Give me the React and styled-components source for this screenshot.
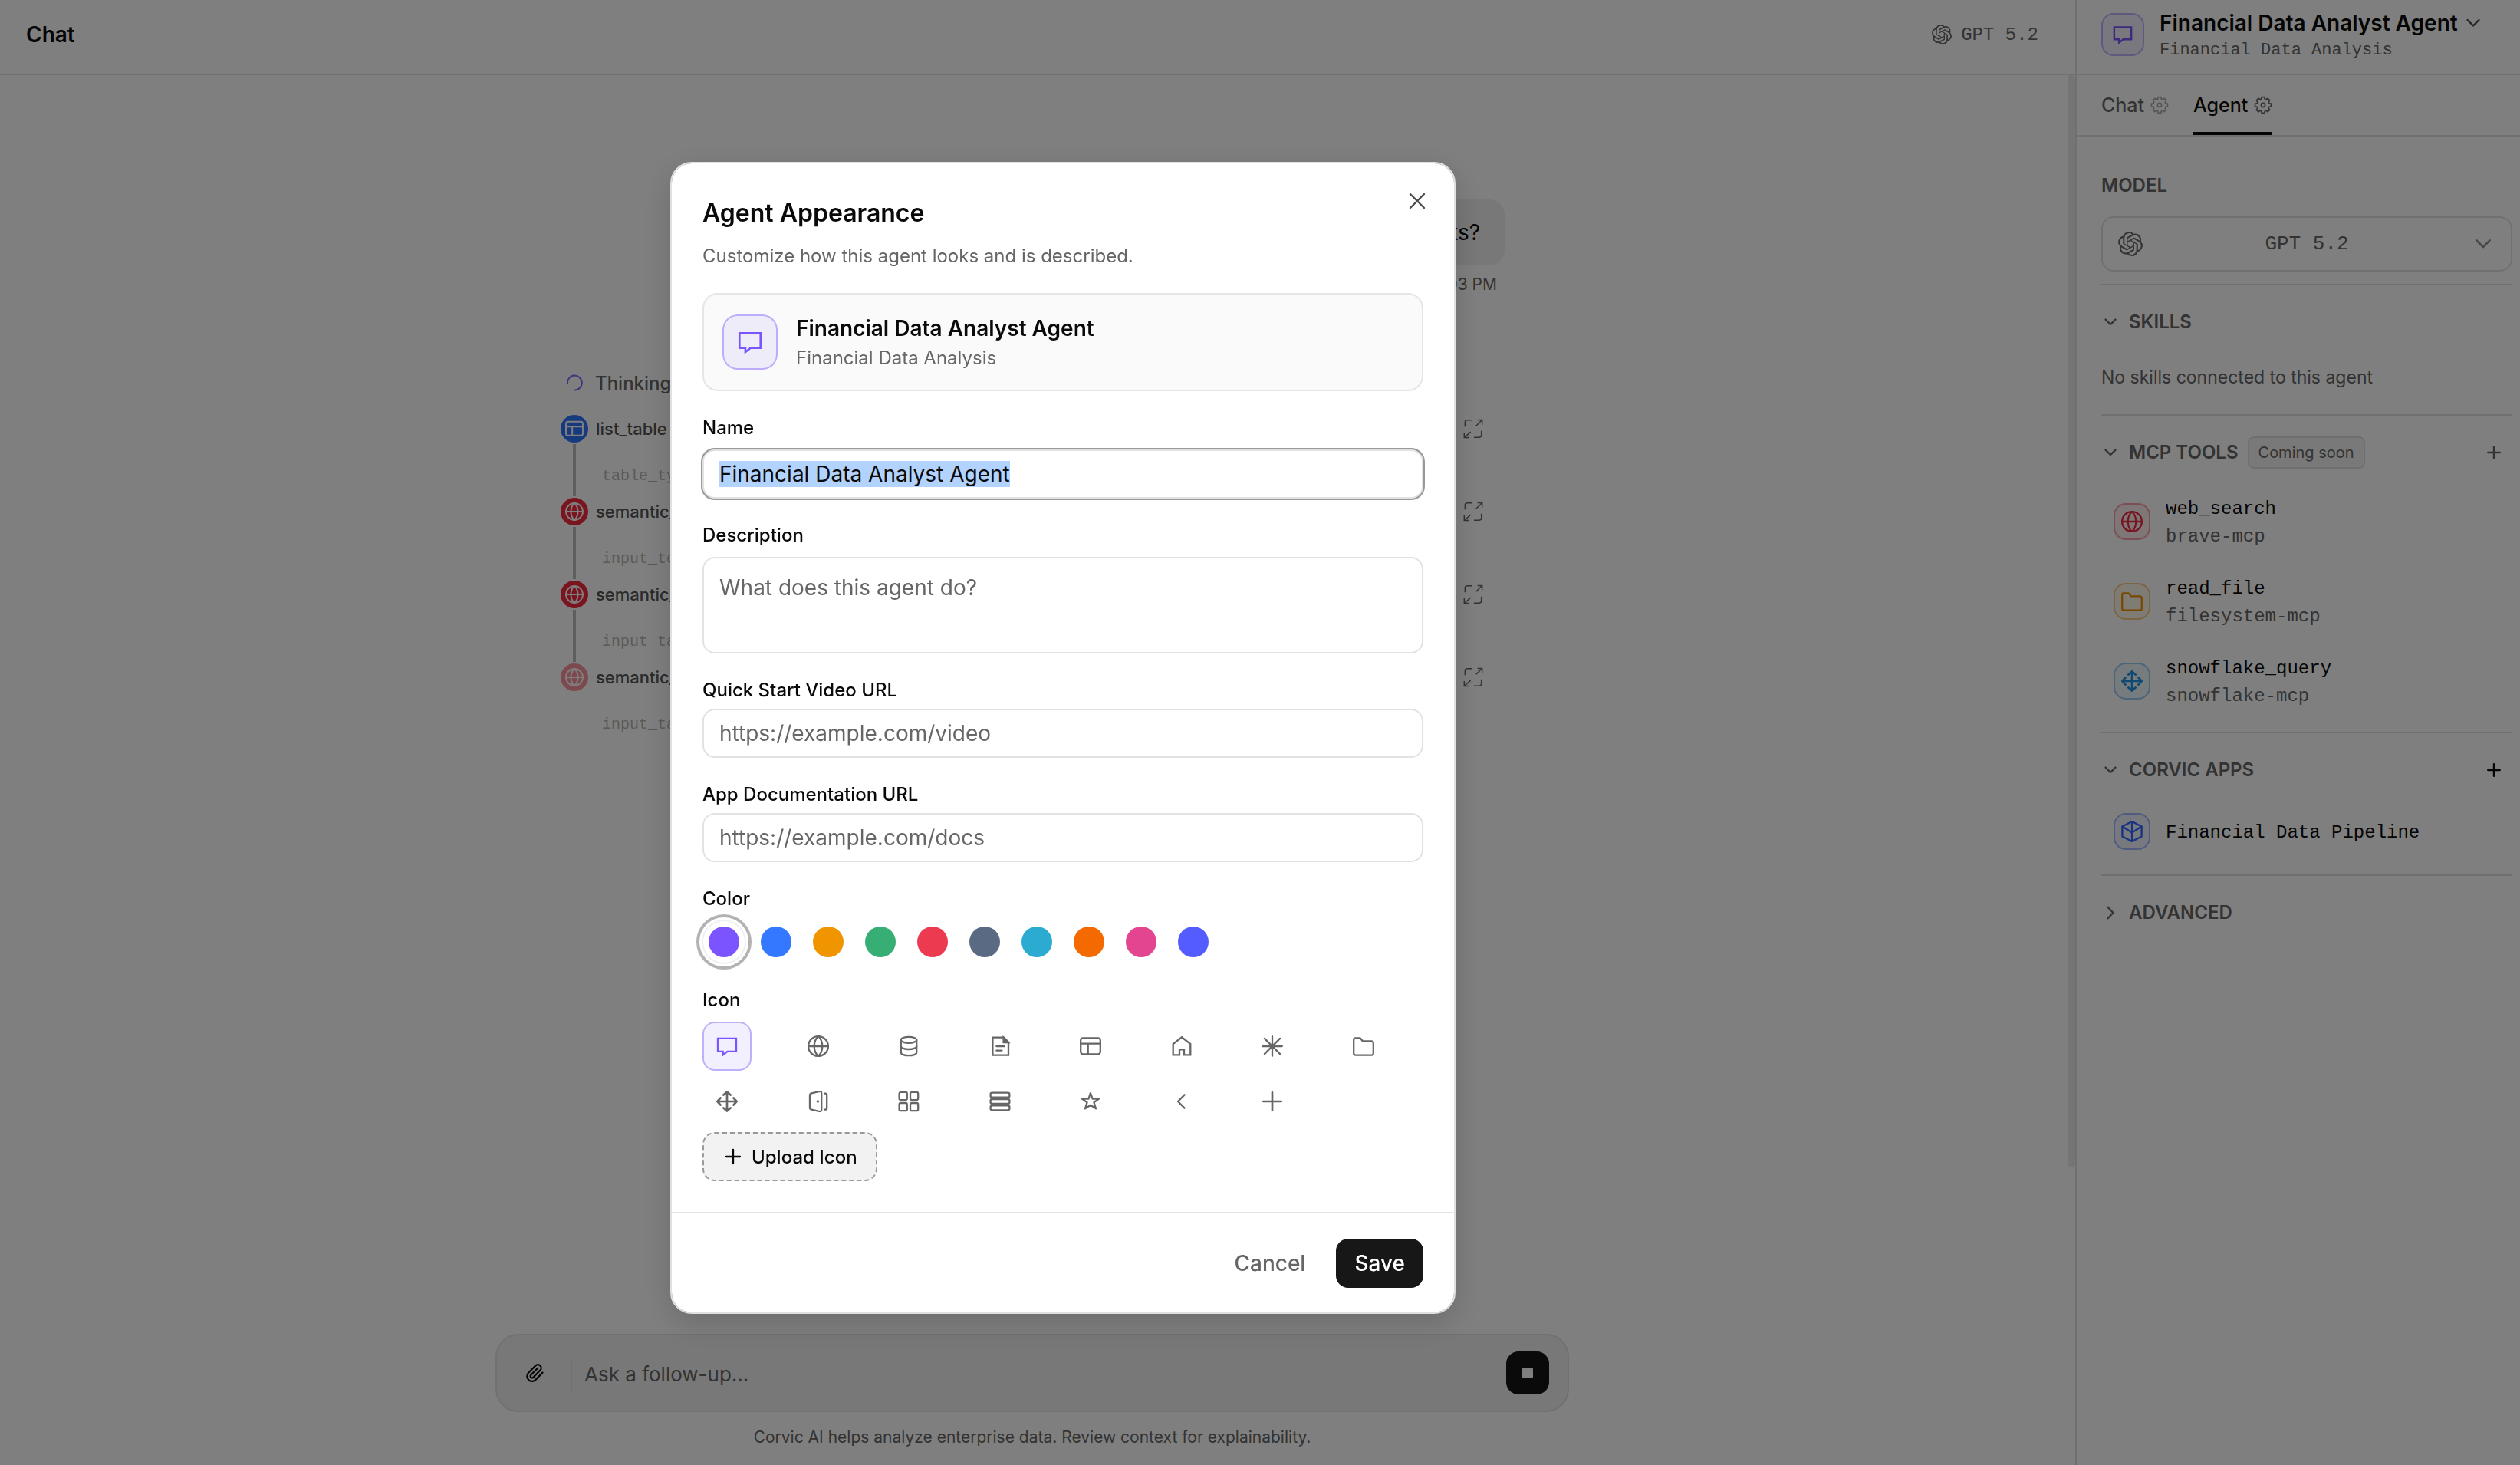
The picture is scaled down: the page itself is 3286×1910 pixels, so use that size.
import React, { useEffect, useRef, useState } from "react";
import styled, { createGlobalStyle } from "styled-components";
import { Paperclip } from "lucide-react";
import { SiOpenai } from "react-icons/si";

const sans = `Inter, "Liberation Sans", sans-serif`;
const mono = `"Liberation Mono", monospace`;

const GlobalStyle = createGlobalStyle`
  * {
    box-sizing: border-box;
  }
  body {
    margin: 0;
    background: #fff;
    color: #0a0a0a;
    font-family: ${sans};
    font-size: 28px;
  }
  button, input, textarea, select {
    font: inherit;
    color: inherit;
    margin: 0;
  }
  button {
    cursor: pointer;
  }
  h1, h2, h3, p, ul {
    margin: 0;
    padding: 0;
  }
  svg {
    display: block;
    flex: none;
  }
`;

/* ---------- icons ---------- */

const Svg = styled.svg.attrs({ viewBox: "0 0 28 28", "aria-hidden": true })`
  width: ${(p) => p.$size || 28}px;
  height: ${(p) => p.$size || 28}px;
  fill: none;
  stroke: currentColor;
  stroke-width: ${(p) => p.$weight || 2.3};
  stroke-linecap: ${(p) => (p.$sharp ? "butt" : "round")};
  stroke-linejoin: ${(p) => (p.$sharp ? "miter" : "round")};
`;

const gearPath = () => {
  const pts = [];
  for (let i = 0; i < 8; i++) {
    const a = (i * Math.PI) / 4 - Math.PI / 2;
    [[-0.28, 9.6], [-0.17, 12.4], [0.17, 12.4], [0.28, 9.6]].forEach(([d, r]) => {
      pts.push(`${(14 + r * Math.cos(a + d)).toFixed(2)} ${(14 + r * Math.sin(a + d)).toFixed(2)}`);
    });
  }
  return `M${pts.join("L")}Z`;
};

const shapes = {
  chat: { sharp: true, body: <path d="M2 3.8H26V20.8H14.6L8.7 25.4V20.8H2Z" /> },
  globe: {
    body: (
      <>
        <circle cx="14" cy="14" r="12.9" />
        <path d="M1 14H27" />
        <path d="M14 1C10 4.8 8.7 9.4 8.7 14S10 23.2 14 27C18 23.2 19.3 18.6 19.3 14S18 4.8 14 1Z" />
      </>
    ),
  },
  database: {
    body: (
      <>
        <ellipse cx="14" cy="5.8" rx="10.2" ry="4" />
        <path d="M3.8 5.8V22.2C3.8 24.6 8.4 26.2 14 26.2S24.2 24.6 24.2 22.2V5.8" />
        <path d="M3.8 14C3.8 16.4 8.4 18 14 18S24.2 16.4 24.2 14" />
      </>
    ),
  },
  document: {
    sharp: true,
    body: (
      <>
        <path d="M4.4 2.7H19L25 8.7V25.7H4.4Z" />
        <path d="M18.6 2.7V9.1H25Z" fill="currentColor" />
        <path d="M9.4 14H19.6M9.4 19.7H16.4" strokeLinecap="round" />
      </>
    ),
  },
  table: {
    body: (
      <>
        <rect x="1.2" y="3.3" width="25.6" height="21" rx="3" />
        <path d="M1.2 10.7H26.8M10.7 10.7V24.3" />
      </>
    ),
  },
  home: { sharp: true, body: <path d="M2.7 11.1L14 2.3L25.3 11.1V25.4H17V18.3H11V25.4H2.7Z" /> },
  asterisk: { body: <path d="M14 1.2V26.8M1.2 14H26.8M3.9 3.9L24.1 24.1M24.1 3.9L3.9 24.1" /> },
  folder: {
    body: <path d="M1.2 5.7C1.2 4.4 2 3.5 3.3 3.5H8.6C9.4 3.5 10.1 3.8 10.6 4.5L12.8 7.3H24.3C25.9 7.3 26.8 8.4 26.8 10V23C26.8 24.6 25.9 25.7 24.3 25.7H3.7C2.1 25.7 1.2 24.6 1.2 23Z" />,
  },
  move: {
    body: (
      <path
        d="M14 1.4V26.6M1.4 14H26.6M9.4 5.6L14 1.4L18.6 5.6M9.4 22.4L14 26.6L18.6 22.4M5.6 9.4L1.4 14L5.6 18.6M22.4 9.4L26.6 14L22.4 18.6"
        strokeWidth="2.7"
      />
    ),
  },
  door: {
    body: (
      <>
        <path d="M3 6C3 4.5 3.8 3.6 5.2 3.3L15.6 1C17.2 0.7 18.2 1.6 18.2 3V25C18.2 26.5 17.2 27.3 15.6 27L5.2 24.7C3.8 24.4 3 23.5 3 22Z" />
        <path d="M22 3.6H23C24.4 3.6 25.2 4.5 25.2 5.8V22.4C25.2 23.7 24.4 24.6 23 24.6H22" />
        <circle cx="13.4" cy="14" r="0.6" fill="currentColor" />
      </>
    ),
  },
  grid: {
    body: (
      <>
        <rect x="1.6" y="1.9" width="10.2" height="10.2" rx="2" />
        <rect x="16" y="1.9" width="10.2" height="10.2" rx="2" />
        <rect x="1.6" y="16" width="10.2" height="10.2" rx="2" />
        <rect x="16" y="16" width="10.2" height="10.2" rx="2" />
      </>
    ),
  },
  rows: {
    body: (
      <>
        <rect x="1.6" y="2.7" width="24.8" height="6" rx="2" />
        <rect x="1.6" y="11" width="24.8" height="6" rx="2" />
        <rect x="1.6" y="19.3" width="24.8" height="6" rx="2" />
      </>
    ),
  },
  star: {
    body: <path d="M14 3.2L16.6 10.6H25L18.4 15.2L21 23.4L14 18.8L7 23.4L9.6 15.2L3 10.6H11.4Z" />,
  },
  left: { body: <path d="M17.6 5.4L9 14L17.6 22.6" /> },
  plus: { body: <path d="M14 2.2V25.8M2.2 14H25.8" strokeWidth="2.7" /> },
  smallPlus: { body: <path d="M14 5V23M5 14H23" /> },
  close: { body: <path d="M5 5L23 23M23 5L5 23" /> },
  down: { body: <path d="M6.5 10L14 17.5L21.5 10" /> },
  right: { body: <path d="M10 5.5L18 14L10 22.5" /> },
  cube: {
    body: (
      <>
        <path d="M14 1L26.6 7.6V20.4L14 27L1.4 20.4V7.6Z" />
        <path d="M14 1V27M1.4 7.6L14 15.4L26.6 7.6" />
      </>
    ),
  },
  gear: {
    body: (
      <>
        <path d={gearPath()} />
        <circle cx="14" cy="14" r="3" />
      </>
    ),
  },
  expand: {
    sharp: true,
    body: (
      <>
        <path d="M2.5 11V5Q2.5 2 5.5 2H13M25.5 17V23Q25.5 26 22.5 26H15" />
        <path d="M18 10L26.6 1.6M20 1.6H26.6V8M10.4 18.5L1.4 26.4M1.4 19.4V26.4H8" />
      </>
    ),
  },
  spinner: { body: <path d="M2.5 15A12 12 0 1 1 15 26" /> },
};

function Icon({ name, size, weight }) {
  const shape = shapes[name];
  return (
    <Svg $size={size} $weight={weight} $sharp={shape.sharp}>
      {shape.body}
    </Svg>
  );
}

/* ---------- page ---------- */

const Shell = styled.div`
  display: grid;
  grid-template-columns: minmax(0, 1fr) 580px;
  height: 100vh;
  overflow: hidden;
`;
const Main = styled.main`
  display: flex;
  flex-direction: column;
  min-height: 0;
`;
const TopBar = styled.header`
  display: flex;
  align-items: center;
  justify-content: space-between;
  flex: none;
  height: 98px;
  padding: 0 48px 6px 34px;
  border-bottom: 2px solid #e0e0e0;
`;
const PageTitle = styled.h1`
  font-size: 28px;
  font-weight: 600;
`;
const ModelTag = styled.div`
  display: flex;
  align-items: center;
  gap: 12px;
  color: #666;
  font-family: ${mono};
  font-size: 24px;
`;
const Body = styled.div`
  display: grid;
  grid-template-columns: minmax(0, 1fr) 14px;
  flex: 1;
  min-height: 0;
`;
const ScrollThumb = styled.div`
  justify-self: end;
  width: 10px;
  height: 78.6%;
  border-radius: 5px;
  background: #ebebeb;
`;
const Column = styled.div`
  display: flex;
  flex-direction: column;
  min-height: 0;
`;
const Thread = styled.section`
  flex: 1;
  width: 100%;
  max-width: 1232px;
  margin: 0 auto;
  padding-top: 162px;
`;
const UserMessage = styled.div`
  display: flex;
  flex-direction: column;
  align-items: flex-end;
`;
const Bubble = styled.p`
  padding: 22px 32px;
  border-radius: 20px;
  background: #f0f0f0;
  font-size: 28px;
  line-height: 42px;
`;
const Time = styled.time`
  padding: 9px 10px 0 0;
  color: #666;
  font-size: 21px;
  line-height: 32px;
`;
const Thinking = styled.div`
  display: flex;
  align-items: center;
  gap: 16px;
  height: 60px;
  margin-top: 82px;
  padding-left: 8px;
  color: #666;
  font-size: 24px;
  font-weight: 500;
`;
const Spinner = styled.span`
  color: #8468ff;
`;
const Steps = styled.div`
  padding-top: 12px;
`;
const Step = styled.div`
  display: grid;
  grid-template-columns: 36px minmax(0, 1fr) 26px;
  grid-template-rows: 36px 72px;
  column-gap: 10px;
  align-items: center;
  padding: 0 28px 0 1px;
`;
const StepIcon = styled.span`
  display: grid;
  place-items: center;
  width: 36px;
  height: 36px;
  border-radius: 50%;
  background: ${(p) => p.$color};
  color: #fff;
  opacity: ${(p) => (p.$pending ? 0.5 : 1)};
`;
const StepName = styled.span`
  color: #555;
  font-size: 22px;
  font-weight: 500;
`;
const StepArgs = styled.span`
  padding: 0 0 17px 8px;
  align-self: end;
  color: #b4b4b4;
  font-family: ${mono};
  font-size: 20px;
`;
const Rail = styled.span`
  justify-self: center;
  width: 4px;
  height: 68px;
  background: ${(p) => (p.$last ? "transparent" : "#bdbdbd")};
`;
const IconButton = styled.button`
  display: grid;
  place-items: center;
  padding: 0;
  border: 0;
  background: none;
  color: ${(p) => p.$color || "#666"};
`;

const Composer = styled.form`
  display: flex;
  align-items: center;
  flex: none;
  width: 100%;
  max-width: 1400px;
  height: 102px;
  margin: 0 auto;
  padding: 0 24px 0 36px;
  border: 2px solid #e2e2e2;
  border-radius: 30px;
  background: #f0f0f0;
`;
const Divider = styled.span`
  width: 2px;
  height: 40px;
  margin: 8px 16px 0 34px;
  background: #e2e2e2;
`;
const FollowUp = styled.input`
  flex: 1;
  min-width: 0;
  padding: 2px 0 0;
  border: 0;
  outline: 0;
  background: none;
  font-size: 26px;
  &::placeholder {
    color: #666;
    opacity: 1;
  }
`;
const StopButton = styled.button`
  display: grid;
  place-items: center;
  width: 56px;
  height: 56px;
  padding: 0;
  border: 0;
  border-radius: 16px;
  background: #141414;
  &::before {
    content: "";
    width: 14px;
    height: 14px;
    border-radius: 2px;
    background: #fff;
  }
`;
const Note = styled.p`
  flex: none;
  padding: 17px 0 20px;
  color: #666;
  font-size: 21px;
  line-height: 32px;
  text-align: center;
`;

/* ---------- agent panel ---------- */

const Panel = styled.aside`
  border-left: 2px solid #e0e0e0;
`;
const PanelHeader = styled.header`
  display: flex;
  align-items: center;
  gap: 20px;
  height: 98px;
  padding: 0 10px 6px 32px;
  border-bottom: 2px solid #e0e0e0;
`;
const IconTile = styled.span`
  display: grid;
  place-items: center;
  flex: none;
  width: ${(p) => p.$size}px;
  height: ${(p) => p.$size}px;
  border: 2px solid ${(p) => p.$color}77;
  border-radius: ${(p) => (p.$size > 60 ? 20 : 16)}px;
  background: ${(p) => p.$color}15;
  background-clip: padding-box;
  color: ${(p) => p.$color};
`;
const AgentName = styled.h2`
  display: flex;
  align-items: center;
  gap: 6px;
  padding-top: 8px;
  font-size: 28px;
  font-weight: 600;
  line-height: 34px;
  white-space: nowrap;
  svg {
    color: #444;
  }
`;
const AgentKind = styled.p`
  color: #666;
  font-family: ${mono};
  font-size: 22px;
  line-height: 38px;
`;
const Tabs = styled.nav`
  display: flex;
  gap: 32px;
  height: 80px;
  padding-left: 32px;
  border-bottom: 2px solid #e0e0e0;
`;
const Tab = styled.button`
  display: flex;
  align-items: center;
  gap: 8px;
  padding: 4px 0 0;
  border: 0;
  border-bottom: 4px solid ${(p) => (p.$active ? "#0a0a0a" : "transparent")};
  background: none;
  color: ${(p) => (p.$active ? "#0a0a0a" : "#666")};
  font-size: 25px;
  font-weight: 500;
  svg {
    color: ${(p) => (p.$active ? "#666" : "#aaa")};
  }
`;
const PanelBody = styled.div`
  padding: 46px 10px 0 32px;
`;
const GroupTitle = styled.h3`
  color: #666;
  font-size: 24px;
  font-weight: 600;
  line-height: 36px;
`;
const ModelPicker = styled.label`
  display: flex;
  align-items: center;
  height: 72px;
  margin: 22px 0 16px;
  padding: 0 20px;
  border: 2px solid #e0e0e0;
  border-radius: 16px;
  color: #666;
`;
const PickerArrow = styled.span`
  color: #8c8c8c;
`;
const ModelSelect = styled.select`
  flex: 1;
  appearance: none;
  border: 0;
  outline: 0;
  background: none;
  font-family: ${mono};
  font-size: 26px;
  text-align: center;
  text-align-last: center;
`;
const Section = styled.section`
  padding: 27px 0 14px;
  border-top: 2px solid #e0e0e0;
`;
const SectionHead = styled.div`
  display: flex;
  align-items: center;
  height: 42px;
  padding-right: 12px;
  color: #666;
`;
const Toggle = styled.button`
  display: flex;
  align-items: center;
  gap: 12px;
  padding: 0;
  border: 0;
  background: none;
`;
const Badge = styled.span`
  margin-left: 12px;
  padding: 0 12px;
  border: 2px solid #dedede;
  border-radius: 8px;
  background: #f2f2f2;
  font-size: 20px;
  line-height: 38px;
`;
const AddSlot = styled.div`
  margin-left: auto;
`;
const Empty = styled.p`
  padding-top: 17px;
  color: #666;
  font-size: 23px;
  line-height: 68px;
`;
const ItemList = styled.ul`
  padding-top: 17px;
  list-style: none;
`;
const Item = styled.li`
  display: flex;
  align-items: center;
  gap: 20px;
  min-height: 84px;
  padding: 16px;
  font-family: ${mono};
  font-size: 24px;
  line-height: 36px;
`;
const ItemText = styled.div`
  padding-top: 2px;
  margin-bottom: -2px;
`;
const ItemSource = styled.div`
  color: #666;
`;

/* ---------- dialog ---------- */

const Overlay = styled.div`
  position: fixed;
  inset: 0;
  display: grid;
  justify-items: center;
  align-items: start;
  padding: 211px 514px 0 0;
  overflow: auto;
  background: rgba(0, 0, 0, 0.5);
`;
const Dialog = styled.form`
  position: relative;
  width: 100%;
  max-width: 1024px;
  border: 2px solid #e0e0e0;
  border-radius: 28px;
  background: #fff;
  background-clip: padding-box;
  box-shadow: 0 12px 40px rgba(0, 0, 0, 0.16);
`;
const CloseButton = styled(IconButton)`
  position: absolute;
  top: 35px;
  right: 34px;
`;
const DialogBody = styled.div`
  padding: 40px;
`;
const DialogTitle = styled.h2`
  font-size: 32px;
  font-weight: 600;
  line-height: 50px;
`;
const DialogText = styled.p`
  margin: 13px 0 31px;
  color: #666;
  font-size: 24px;
  line-height: 35px;
`;
const Preview = styled.div`
  display: flex;
  align-items: center;
  gap: 24px;
  padding: 24px;
  border: 2px solid #e5e5e5;
  border-radius: 20px;
  background: #fafafa;
`;
const PreviewName = styled.div`
  font-size: 28px;
  font-weight: 600;
  line-height: 40px;
`;
const PreviewKind = styled.div`
  padding-top: 2px;
  color: #666;
  font-size: 24px;
  line-height: 34px;
`;
const Field = styled.div`
  display: flex;
  flex-direction: column;
  gap: ${(p) => (p.$tight ? 6 : 10)}px;
  margin-top: 30px;
`;
const Label = styled.label`
  font-size: 24px;
  font-weight: 500;
  line-height: 36px;
`;
const TextInput = styled.input`
  width: 100%;
  height: 64px;
  padding: 0 20px;
  border: 2px solid #e2e2e2;
  border-radius: 16px;
  outline: 0;
  background: #fff;
  font-size: 28px;
  &::placeholder {
    color: #666;
    opacity: 1;
  }
  &::selection {
    background: #b2d3fd;
    color: #0a0a0a;
  }
  &:focus {
    box-shadow: 0 0 0 2px #999;
  }
`;
const TextArea = styled(TextInput).attrs({ as: "textarea" })`
  display: block;
  height: 126px;
  padding: 18px 20px;
  line-height: 40px;
  resize: none;
`;
const Swatches = styled.div`
  display: flex;
  gap: 12px;
`;
const Swatch = styled.input.attrs({ type: "radio", name: "color" })`
  appearance: none;
  width: 56px;
  height: 56px;
  padding: 8px;
  border-radius: 50%;
  background: ${(p) => p.$color} content-box;
  cursor: pointer;
  &:checked {
    outline: 4px solid #b3b3b3;
    outline-offset: 4px;
    box-shadow: 0 0 0 1px #f0f0f0;
  }
`;
const IconGrid = styled.div`
  display: grid;
  grid-template-columns: repeat(8, 1fr);
  gap: 8px;
`;
const IconChoice = styled.button`
  display: grid;
  place-items: center;
  width: 64px;
  height: 64px;
  padding: 0;
  border: 2px solid ${(p) => (p.$active ? "#bfb0fb" : "transparent")};
  border-radius: 16px;
  background: ${(p) => (p.$active ? "#f2efff" : "none")};
  color: ${(p) => (p.$active ? "#7a55ff" : "#666")};
`;
const UploadButton = styled.button`
  display: flex;
  align-items: center;
  align-self: flex-start;
  gap: 10px;
  height: 64px;
  margin-top: -2px;
  padding: 0 24px;
  border: 2px dashed #999;
  border-radius: 16px;
  background: #f2f2f2;
  font-size: 24px;
  font-weight: 500;
`;
const DialogFooter = styled.footer`
  display: flex;
  justify-content: flex-end;
  gap: 16px;
  padding: 33px 40px 32px;
  border-top: 2px solid #e5e5e5;
`;
const Button = styled.button`
  height: 64px;
  padding: 0 24px;
  border: 0;
  border-radius: 16px;
  background: ${(p) => (p.$primary ? "#171717" : "none")};
  color: ${(p) => (p.$primary ? "#fff" : "#666")};
  font-size: 28px;
  font-weight: 500;
`;

const steps = [
  { icon: "table", color: "#2f74ff", name: "list_table", args: "table_type: all" },
  { icon: "globe", color: "#f5283c", name: "semantic_search", args: "input_text: revenue" },
  { icon: "globe", color: "#f5283c", name: "semantic_search", args: "input_table: metrics" },
  { icon: "globe", color: "#f5283c", name: "semantic_search", args: "input_table: results", pending: true },
];

const tools = [
  { icon: "globe", color: "#ee2c42", name: "web_search", source: "brave-mcp" },
  { icon: "folder", color: "#f09000", name: "read_file", source: "filesystem-mcp" },
  { icon: "move", color: "#1e90e0", name: "snowflake_query", source: "snowflake-mcp" },
];

const colors = [
  ["Violet", "#7c54ff"],
  ["Blue", "#3478ff"],
  ["Amber", "#f09400"],
  ["Green", "#36ae74"],
  ["Red", "#ec3b50"],
  ["Slate", "#5b6a83"],
  ["Cyan", "#2cabd1"],
  ["Orange", "#f46a00"],
  ["Pink", "#e44590"],
  ["Indigo", "#545cff"],
];

const iconNames = [
  "chat", "globe", "database", "document", "table", "home", "asterisk", "folder",
  "move", "door", "grid", "rows", "star", "left", "plus",
];

function PanelSection({ title, badge, onAdd, addColor, closed, children }) {
  return (
    <Section>
      <SectionHead>
        <Toggle type="button" aria-expanded={!closed}>
          <Icon name={closed ? "right" : "down"} size={24} weight={2.8} />
          <GroupTitle>{title}</GroupTitle>
        </Toggle>
        {badge && <Badge>{badge}</Badge>}
        {onAdd && (
          <AddSlot>
            <IconButton type="button" aria-label={`Add to ${title}`} $color={addColor}>
              <Icon name="smallPlus" size={24} weight={2.8} />
            </IconButton>
          </AddSlot>
        )}
      </SectionHead>
      {children}
    </Section>
  );
}

function AgentPanel() {
  return (
    <Panel>
      <PanelHeader>
        <IconTile $size={56} $color="#7a55ff">
          <Icon name="chat" size={26} weight={2.6} />
        </IconTile>
        <div>
          <AgentName>
            Financial Data Analyst Agent
            <Icon name="down" size={28} />
          </AgentName>
          <AgentKind>Financial Data Analysis</AgentKind>
        </div>
      </PanelHeader>
      <Tabs>
        <Tab type="button">
          Chat <Icon name="gear" size={24} weight={2} />
        </Tab>
        <Tab type="button" $active>
          Agent <Icon name="gear" size={24} weight={2} />
        </Tab>
      </Tabs>
      <PanelBody>
        <GroupTitle>MODEL</GroupTitle>
        <ModelPicker>
          <SiOpenai size={32} />
          <ModelSelect aria-label="Model">
            <option>GPT 5.2</option>
          </ModelSelect>
          <PickerArrow>
            <Icon name="down" size={32} />
          </PickerArrow>
        </ModelPicker>
        <PanelSection title="SKILLS">
          <Empty>No skills connected to this agent</Empty>
        </PanelSection>
        <PanelSection title="MCP TOOLS" badge="Coming soon" onAdd addColor="#666">
          <ItemList>
            {tools.map((tool) => (
              <Item key={tool.name}>
                <IconTile $size={48} $color={tool.color}>
                  <Icon name={tool.icon} />
                </IconTile>
                <ItemText>
                  {tool.name}
                  <ItemSource>{tool.source}</ItemSource>
                </ItemText>
              </Item>
            ))}
          </ItemList>
        </PanelSection>
        <PanelSection title="CORVIC APPS" onAdd addColor="#0a0a0a">
          <ItemList>
            <Item>
              <IconTile $size={48} $color="#2f68ff">
                <Icon name="cube" />
              </IconTile>
              <ItemText>Financial Data Pipeline</ItemText>
            </Item>
          </ItemList>
        </PanelSection>
        <PanelSection title="ADVANCED" closed />
      </PanelBody>
    </Panel>
  );
}

function AppearanceDialog() {
  const nameRef = useRef(null);
  const [color, setColor] = useState("Violet");
  const [icon, setIcon] = useState("chat");

  useEffect(() => {
    nameRef.current.focus();
    nameRef.current.select();
  }, []);

  return (
    <Overlay>
      <Dialog role="dialog" aria-labelledby="dialog-title" onSubmit={(e) => e.preventDefault()}>
        <DialogBody>
          <DialogTitle id="dialog-title">Agent Appearance</DialogTitle>
          <DialogText>Customize how this agent looks and is described.</DialogText>
          <Preview>
            <IconTile $size={72} $color="#7a55ff">
              <Icon name="chat" size={32} />
            </IconTile>
            <div>
              <PreviewName>Financial Data Analyst Agent</PreviewName>
              <PreviewKind>Financial Data Analysis</PreviewKind>
            </div>
          </Preview>
          <Field>
            <Label htmlFor="name">Name</Label>
            <TextInput id="name" ref={nameRef} defaultValue="Financial Data Analyst Agent" />
          </Field>
          <Field>
            <Label htmlFor="description">Description</Label>
            <TextArea id="description" placeholder="What does this agent do?" />
          </Field>
          <Field $tight>
            <Label htmlFor="video">Quick Start Video URL</Label>
            <TextInput id="video" placeholder="https://example.com/video" />
          </Field>
          <Field $tight>
            <Label htmlFor="docs">App Documentation URL</Label>
            <TextInput id="docs" placeholder="https://example.com/docs" />
          </Field>
          <Field>
            <Label as="span" id="color-label">Color</Label>
            <Swatches role="radiogroup" aria-labelledby="color-label">
              {colors.map(([name, value]) => (
                <Swatch
                  key={name}
                  aria-label={name}
                  $color={value}
                  checked={color === name}
                  onChange={() => setColor(name)}
                />
              ))}
            </Swatches>
          </Field>
          <Field>
            <Label as="span" id="icon-label">Icon</Label>
            <IconGrid role="group" aria-labelledby="icon-label">
              {iconNames.map((name) => (
                <IconChoice
                  key={name}
                  type="button"
                  aria-label={name}
                  aria-pressed={icon === name}
                  $active={icon === name}
                  onClick={() => setIcon(name)}
                >
                  <Icon name={name} />
                </IconChoice>
              ))}
            </IconGrid>
            <UploadButton type="button">
              <Icon name="smallPlus" />
              Upload Icon
            </UploadButton>
          </Field>
        </DialogBody>
        <DialogFooter>
          <Button type="button">Cancel</Button>
          <Button type="submit" $primary>Save</Button>
        </DialogFooter>
        <CloseButton type="button" aria-label="Close" $color="#4a4a4a">
          <Icon name="close" />
        </CloseButton>
      </Dialog>
    </Overlay>
  );
}

export default function App() {
  return (
    <>
      <GlobalStyle />
      <Shell>
        <Main>
          <TopBar>
            <PageTitle>Chat</PageTitle>
            <ModelTag>
              <SiOpenai size={26} /> GPT 5.2
            </ModelTag>
          </TopBar>
          <Body>
            <Column>
              <Thread>
                <UserMessage>
                  <Bubble>Which regions had the best quarterly results?</Bubble>
                  <Time>2:03 PM</Time>
                </UserMessage>
                <Thinking>
                  <Spinner>
                    <Icon name="spinner" size={22} weight={2.6} />
                  </Spinner>
                  Thinking
                </Thinking>
                <Steps>
                  {steps.map((step, i) => (
                    <Step key={i}>
                      <StepIcon $color={step.color} $pending={step.pending}>
                        <Icon name={step.icon} size={24} />
                      </StepIcon>
                      <StepName>{step.name}</StepName>
                      <IconButton type="button" aria-label="Expand">
                        <Icon name="expand" size={26} weight={1.6} />
                      </IconButton>
                      <Rail $last={i === steps.length - 1} />
                      <StepArgs>{step.args}</StepArgs>
                    </Step>
                  ))}
                </Steps>
              </Thread>
              <Composer onSubmit={(e) => e.preventDefault()}>
                <IconButton type="button" aria-label="Attach file" $color="#0a0a0a">
                  <Paperclip size={26} />
                </IconButton>
                <Divider />
                <FollowUp aria-label="Ask a follow-up" placeholder="Ask a follow-up..." />
                <StopButton type="button" aria-label="Stop" />
              </Composer>
              <Note>Corvic AI helps analyze enterprise data. Review context for explainability.</Note>
            </Column>
            <ScrollThumb />
          </Body>
        </Main>
        <AgentPanel />
      </Shell>
      <AppearanceDialog />
    </>
  );
}
